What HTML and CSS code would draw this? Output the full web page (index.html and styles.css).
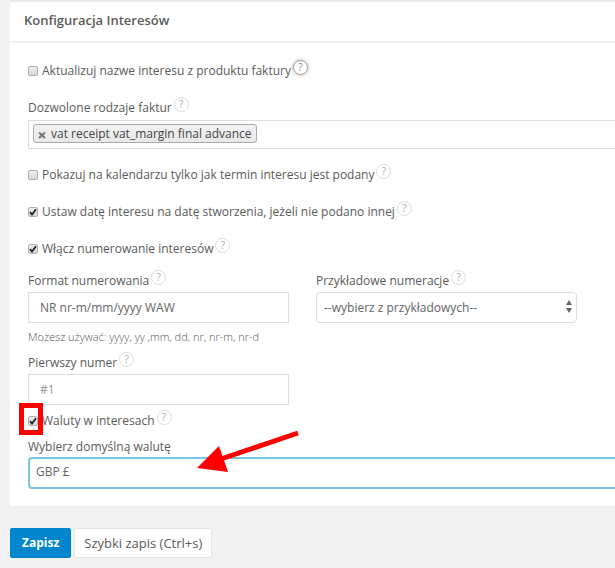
FILE: index.html
```html
<!DOCTYPE html>
<html lang="pl">
<head>
<meta charset="utf-8">
<title>Konfiguracja Interesów</title>
<link rel="stylesheet" href="styles.css">
</head>
<body>
<form class="page">
  <section class="card">
    <h2 class="card-title">Konfiguracja Interesów</h2>
    <div class="card-body">
      <div class="row">
        <input class="check" type="checkbox" id="update-name">
        <label for="update-name">Aktualizuj nazwe interesu z produktu faktury</label>
        <span class="help help-active">?</span>
      </div>

      <div class="field">
        <div class="row">
          <label for="kinds">Dozwolone rodzaje faktur</label>
          <span class="help">?</span>
        </div>
        <div class="tags">
          <span class="tag">
            <button class="tag-remove" type="button" aria-label="Usuń"><svg viewBox="0 0 8 8" width="8" height="8"><path d="M1 1.5 7 7M7 1.5 1 7" stroke="#777" stroke-width="2" fill="none"/></svg></button>
            vat receipt vat_margin final advance
          </span>
          <input class="tags-input" id="kinds" type="text">
        </div>
      </div>

      <div class="row">
        <input class="check" type="checkbox" id="calendar">
        <label for="calendar">Pokazuj na kalendarzu tylko jak termin interesu jest podany</label>
        <span class="help">?</span>
      </div>
      <div class="row">
        <input class="check" type="checkbox" id="set-date" checked>
        <label for="set-date">Ustaw datę interesu na datę stworzenia, jeżeli nie podano innej</label>
        <span class="help">?</span>
      </div>
      <div class="row">
        <input class="check" type="checkbox" id="numbering" checked>
        <label for="numbering">Włącz numerowanie interesów</label>
        <span class="help">?</span>
      </div>

      <div class="group">
        <div class="columns">
          <div class="column">
            <div class="row">
              <label for="format">Format numerowania</label>
              <span class="help">?</span>
            </div>
            <input class="control" id="format" type="text" value="NR nr-m/mm/yyyy WAW">
            <p class="hint">Możesz używać: yyyy, yy ,mm, dd, nr, nr-m, nr-d</p>
          </div>
          <div class="column">
            <div class="row">
              <label for="examples">Przykładowe numeracje</label>
              <span class="help">?</span>
            </div>
            <div class="select-wrap">
              <select class="control select" id="examples">
                <option>--wybierz z przykładowych--</option>
              </select>
              <svg class="select-arrows" viewBox="0 0 6 13" width="6" height="13"><path d="M0 5 3 0 6 5zM0 8 3 13 6 8z" fill="#666"/></svg>
            </div>
          </div>
        </div>
        <div class="columns">
          <div class="column">
            <div class="row">
              <label for="first">Pierwszy numer</label>
              <span class="help">?</span>
            </div>
            <input class="control" id="first" type="text" placeholder="#1">
          </div>
        </div>
        <div class="row currency-toggle">
          <input class="check" type="checkbox" id="currencies" checked>
          <label for="currencies">Waluty w interesach</label>
          <span class="help">?</span>
          <span class="marker"></span>
        </div>
        <div class="currency">
          <div class="row">
            <label for="currency">Wybierz domyślną walutę</label>
          </div>
          <select class="control currency-select" id="currency">
            <option>GBP £</option>
          </select>
          <svg class="pointer" viewBox="0 0 103 44" width="103" height="44"><path d="M101 3 24 29" stroke="#f00" stroke-width="5" fill="none"/><path d="M0 38 22 16 31 42z" fill="#f00"/></svg>
        </div>
      </div>
    </div>
  </section>
  <div class="actions">
    <button class="btn btn-primary" type="submit">Zapisz</button>
    <button class="btn" type="button">Szybki zapis (Ctrl+s)</button>
  </div>
</form>
</body>
</html>
```
FILE: styles.css
```css
* {
  box-sizing: border-box;
}

body {
  margin: 0;
  background: #f2f2f2;
  color: #5a5a5a;
  font: 400 12px/20px "Open Sans", "Liberation Sans", sans-serif;
  overflow-x: hidden;
}

input,
select,
button {
  font: inherit;
  color: inherit;
}

.page {
  padding-left: 10px;
}

.card {
  background: #fff;
  border-top: 2px solid #e6eaed;
  border-bottom: 1px solid #ececec;
}

.card-title {
  margin: 0;
  padding: 8px 14px 11px;
  border-bottom: 2px solid #f1f1f1;
  font-size: 13px;
  font-weight: 600;
  line-height: 20px;
}

.card-body {
  display: flex;
  flex-direction: column;
  gap: 17px;
  padding: 18px 0 17px 18px;
}

.row {
  display: flex;
  align-items: flex-start;
  height: 20px;
}

.check {
  appearance: none;
  flex: none;
  width: 10px;
  height: 10px;
  margin: 5px 4px 0 0;
  border: 1px solid #b0b0b0;
  border-radius: 2px;
  background: linear-gradient(#eee, #d8d8d8);
}

.check:checked {
  background: url("data:image/svg+xml,%3Csvg xmlns='http://www.w3.org/2000/svg' viewBox='0 0 8 8'%3E%3Cpath d='M1 4.2 3 6.5 7 1.2' fill='none' stroke='%23222' stroke-width='1.8'/%3E%3C/svg%3E"), linear-gradient(#eee, #d8d8d8);
}

.help {
  flex: none;
  width: 15px;
  height: 15px;
  margin: -1px 0 0 2px;
  border: 1px solid #ddd;
  border-radius: 50%;
  color: #aaa;
  font-size: 10px;
  line-height: 13px;
  text-align: center;
}

.help-active {
  border-color: #999;
  color: #888;
  box-shadow: 0 0 4px #bbb;
}

.field {
  display: flex;
  flex-direction: column;
  gap: 2px;
  margin-bottom: -1px;
}

.tags {
  display: flex;
  padding: 3px 4px 5px;
  border: 1px solid #ddd;
  border-right: 0;
}

.tag {
  display: flex;
  align-items: center;
  gap: 5px;
  height: 19px;
  padding: 0 4px;
  border: 1px solid #aaa;
  border-radius: 3px;
  background: linear-gradient(#f2f2f2, #e8e8e8);
  color: #444;
}

.tag-remove {
  display: flex;
  padding: 2px 0 0;
  border: 0;
  background: none;
}

.tags-input {
  flex: 1;
  min-width: 0;
  height: 19px;
  border: 0;
  outline: 0;
}

.group {
  margin-top: -5px;
}

.columns {
  display: flex;
  gap: 27px;
  margin-bottom: 6px;
}

.column {
  flex: 0 1 261px;
  min-width: 0;
}

.control {
  display: block;
  width: 100%;
  height: 31px;
  margin-top: 1px;
  padding: 0 11px;
  border: 1px solid #ddd;
  background: #fff;
  color: #666;
}

.control::placeholder {
  color: #999;
}

.hint {
  margin: 4px 0 0;
  color: #555;
  font-size: 11px;
  font-weight: 300;
}

.select-wrap {
  position: relative;
}

.select {
  appearance: none;
  padding: 0 7px;
  border-radius: 4px;
}

.select-arrows {
  position: absolute;
  top: 8px;
  right: 5px;
}

.currency-toggle {
  position: relative;
}

.marker {
  position: absolute;
  top: -8px;
  left: -9px;
  width: 24px;
  height: 32px;
  border: 5px solid #f00;
}

.currency {
  position: relative;
  margin-top: 6px;
}

.currency-select {
  appearance: none;
  height: 32px;
  margin-top: 0;
  padding: 0 6px 3px;
  border: 2px solid #7ac5e2;
  border-right: 0;
  border-radius: 4px 0 0 4px;
}

.pointer {
  position: absolute;
  top: -7px;
  left: 169px;
}

.actions {
  display: flex;
  gap: 3px;
  padding: 21px 0 10px;
}

.btn {
  height: 30px;
  padding: 0 9px;
  border: 1px solid #e5e5e5;
  border-radius: 2px;
  background: #fff;
  font-size: 13px;
}

.btn-primary {
  padding: 0 11px;
  border-color: #0084c8;
  background: #0086cd;
  color: #fff;
  font-size: 12px;
  font-weight: 700;
}
```
